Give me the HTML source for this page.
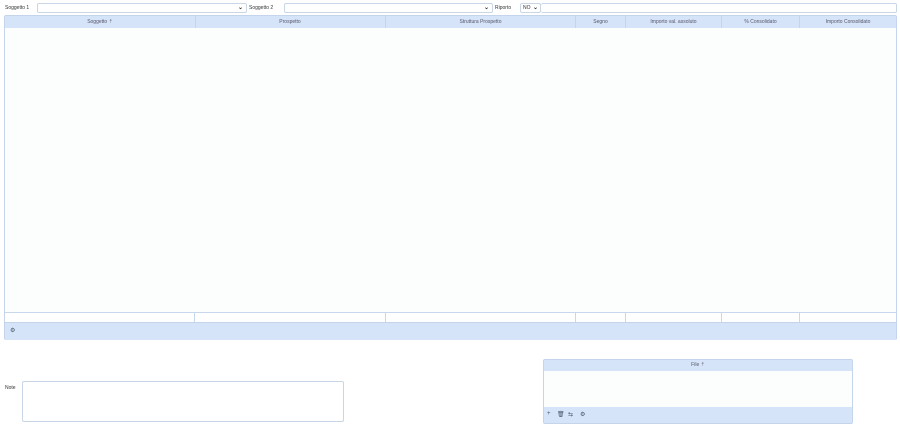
<!DOCTYPE html><html><head><style>
body{margin:0;width:900px;height:439px;background:#fff;font-family:"Liberation Sans",sans-serif;font-size:5px;color:#333;position:relative;overflow:hidden}
.a{position:absolute}
.sel{position:absolute;border:1px solid #c8d6e6;border-radius:2px;background:#fff;height:8px}
.th{position:absolute;top:0;height:12px;line-height:12px;text-align:center;color:#556;border-right:1px solid #c4d4ea}
.fc{position:absolute;top:0;height:9px;border-right:1px solid #c8d8ec}
</style></head><body>
<div class="a" style="left:5px;top:5px">Soggetto 1</div>
<div class="sel" style="left:37px;top:3px;width:208px"><span class="a" style="right:3px;top:0;font-size:6px;font-weight:bold">⌄</span></div>
<div class="a" style="left:249px;top:5px">Soggetto 2</div>
<div class="sel" style="left:284px;top:3px;width:207px"><span class="a" style="right:3px;top:0;font-size:6px;font-weight:bold">⌄</span></div>
<div class="a" style="left:495px;top:5px">Riporto</div>
<div class="sel" style="left:520px;top:3px;width:19px"><span class="a" style="left:2px;top:1px">NO</span><span class="a" style="right:2px;top:0;font-size:6px;font-weight:bold">⌄</span></div>
<div class="sel" style="left:541px;top:3px;width:355px;border-left:none"></div>

<div class="a" style="left:4px;top:15px;width:891px;height:323px;border:1px solid #c4d4ea;background:#fcfdfd;border-radius:2px">
<div class="a" style="left:0;top:0;width:891px;height:12px;background:#d6e4fa">
<div class="th" style="left:0;width:190px">Soggetto ⇡</div>
<div class="th" style="left:190px;width:190px">Prospetto</div>
<div class="th" style="left:381px;width:189px">Struttura Prospetto</div>
<div class="th" style="left:571px;width:49px">Segno</div>
<div class="th" style="left:621px;width:95px">Importo val. assoluto</div>
<div class="th" style="left:717px;width:77px">% Consolidato</div>
<div class="th" style="left:795px;width:96px;border:none">Importo Consolidato</div>
</div>
<div class="a" style="left:0;top:296px;width:891px;height:9px;background:#fff;border-top:1px solid #c8d8ec">
<div class="fc" style="left:0;width:189px"></div><div class="fc" style="left:190px;width:190px"></div><div class="fc" style="left:381px;width:189px"></div><div class="fc" style="left:571px;width:49px"></div><div class="fc" style="left:621px;width:95px"></div><div class="fc" style="left:717px;width:77px"></div>
</div>
<div class="a" style="left:0;top:306px;width:891px;height:17px;background:#d6e4fa;border-top:1px solid #c4d4ea"><span class="a" style="left:5px;top:4px;font-size:6px;color:#456">⚙</span></div>
</div>

<div class="a" style="left:5px;top:385px">Note</div>
<div class="a" style="left:22px;top:381px;width:320px;height:39px;border:1px solid #c8d6e6;border-radius:2px;background:#fff"></div>

<div class="a" style="left:543px;top:359px;width:308px;height:63px;border:1px solid #c4d4ea;border-radius:2px;background:#fcfdfd">
<div class="a" style="left:0;top:0;width:308px;height:11px;line-height:11px;background:#d6e4fa;text-align:center;color:#556">File ⇡</div>
<div class="a" style="left:0;top:47px;width:308px;height:16px;background:#d6e4fa;color:#456;font-size:6px">
<span class="a" style="left:3px;top:4px">+</span><span class="a" style="left:13px;top:4px">🗑</span><span class="a" style="left:24px;top:4px">⇆</span><span class="a" style="left:36px;top:4px">⚙</span></div>
</div>
</body></html>
